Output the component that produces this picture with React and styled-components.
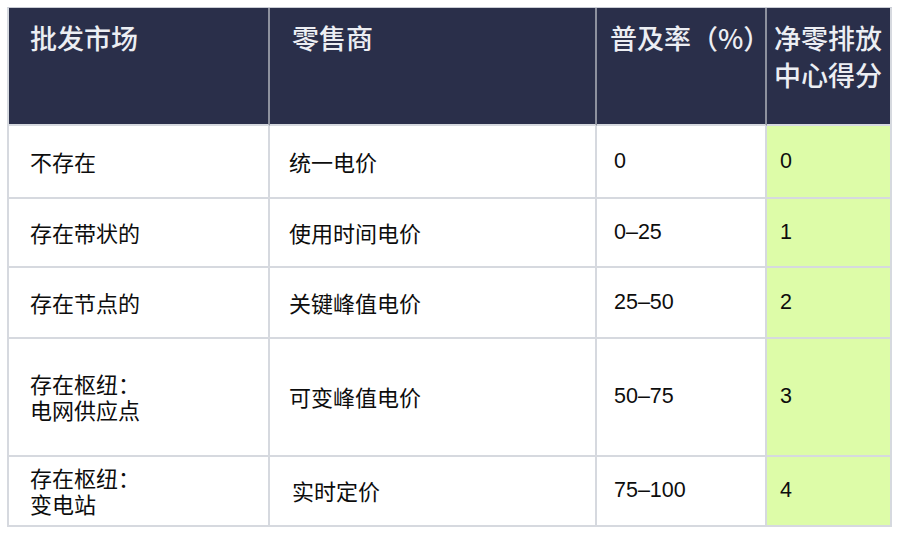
import styled, { createGlobalStyle } from 'styled-components';

const GlobalStyle = createGlobalStyle`
  body {
    margin: 0;
    background: #ffffff;
    font-family: "Noto Sans CJK SC", "Noto Sans", sans-serif;
  }
`;

const rows = [
  { market: ['不存在'], retail: '统一电价', rate: '0', score: '0', height: 73 },
  { market: ['存在带状的'], retail: '使用时间电价', rate: '0–25', score: '1', height: 69 },
  { market: ['存在节点的'], retail: '关键峰值电价', rate: '25–50', score: '2', height: 71 },
  { market: ['存在枢纽：', '电网供应点'], retail: '可变峰值电价', rate: '50–75', score: '3', height: 118 },
  { market: ['存在枢纽：', '变电站'], retail: '实时定价', rate: '75–100', score: '4', height: 70 },
];

const App = () => {
  return (
    <>
      <GlobalStyle />
      <Page>
        <Table>
          <colgroup>
            <col style={{ width: 261 }} />
            <col style={{ width: 327 }} />
            <col style={{ width: 170 }} />
            <col style={{ width: 125 }} />
          </colgroup>
          <thead>
            <tr>
              <HeadCell $pad={21}>批发市场</HeadCell>
              <HeadCell $pad={22}>零售商</HeadCell>
              <HeadCell $pad={13}>普及率（%）</HeadCell>
              <HeadCell $pad={7}>
                净零排放
                <br />
                中心得分
              </HeadCell>
            </tr>
          </thead>
          <tbody>
            {rows.map((row) => (
              <Row key={row.score} $height={row.height}>
                <Cell $pad={21}>
                  {row.market.map((line) => (
                    <Line key={line}>{line}</Line>
                  ))}
                </Cell>
                <Cell $pad={row.score === '4' ? 22 : 19}>{row.retail}</Cell>
                <NumCell $pad={17}>{row.rate}</NumCell>
                <NumCell $pad={13} $score>{row.score}</NumCell>
              </Row>
            ))}
          </tbody>
        </Table>
      </Page>
    </>
  );
};

const Page = styled.main`
  padding: 7px 0 0 7px;
`;

const Table = styled.table`
  width: 883px;
  table-layout: fixed;
  border-collapse: separate;
  border-spacing: 0;
  border-left: 2px solid #d6d9df;
  border-top: 1px solid #c9ccd4;
`;

const HeadCell = styled.th`
  height: 118px;
  box-sizing: border-box;
  vertical-align: top;
  text-align: left;
  padding: 11px 4px 0 ${(p) => p.$pad}px;
  background: #2a2f4a;
  color: #eceef3;
  font-size: 27px;
  font-weight: 500;
  line-height: 37px;
  white-space: nowrap;
  border-right: 2px solid #8d919e;
  border-bottom: 2px solid #d6d9df;

  &:last-child {
    border-right-color: #d6d9df;
  }
`;

const Row = styled.tr`
  height: ${(p) => p.$height}px;
`;

const Cell = styled.td`
  box-sizing: border-box;
  vertical-align: middle;
  padding: 0 4px 2px ${(p) => p.$pad}px;
  background: ${(p) => (p.$score ? '#ddfca8' : '#ffffff')};
  color: #0d0d0d;
  font-size: 22px;
  line-height: 26px;
  border-right: 2px solid #d6d9df;
  border-bottom: 2px solid #d6d9df;
`;

const NumCell = styled(Cell)`
  font-family: "Liberation Sans", Arial, sans-serif;
  font-size: 21.5px;
`;

const Line = styled.div`
  line-height: 26px;
`;

export default App;
